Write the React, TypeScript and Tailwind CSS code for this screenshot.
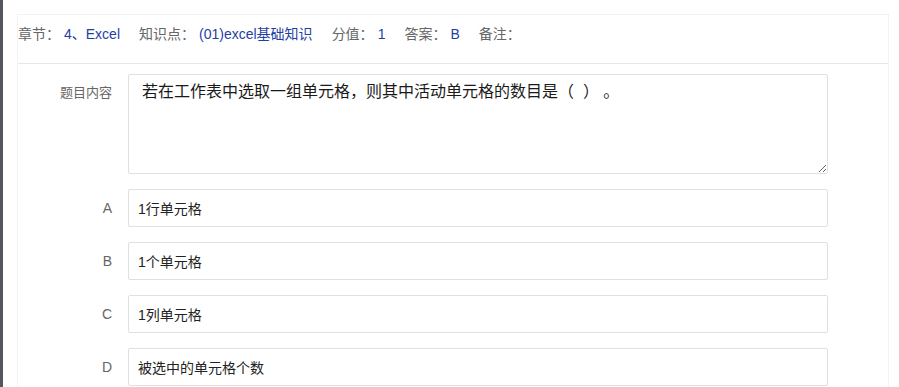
import React from 'react';

const FONT = "font-['Liberation_Sans','Noto_Sans_CJK_SC',sans-serif]";

const meta = [
  { label: '章节：', value: '4、Excel' },
  { label: '知识点：', value: '(01)excel基础知识' },
  { label: '分值：', value: '1' },
  { label: '答案：', value: 'B' },
  { label: '备注：', value: '' },
];

const options = [
  { key: 'A', text: '1行单元格' },
  { key: 'B', text: '1个单元格' },
  { key: 'C', text: '1列单元格' },
  { key: 'D', text: '被选中的单元格个数' },
];

const App: React.FC = () => {
  return (
    <div className={`flex min-h-screen bg-white ${FONT}`}>
      <div className="w-[3px] shrink-0 bg-[#53565c]" />
      <div className="ml-[14px] mt-[14px] w-[872px] border-x border-t border-[#f3f3f3]">
        {/* info bar */}
        <div className="flex h-[49px] border-b border-[#e6e6e6] pt-[9px] text-[14px] leading-[20px]">
          {meta.map((m) => (
            <div key={m.label} className="mr-[19px] flex">
              <span className="text-[#666]">{m.label}</span>
              {m.value && <span className="ml-[4px] text-[#1f3fa3]">{m.value}</span>}
            </div>
          ))}
        </div>

        <div className="flex flex-col gap-[15px] pt-[10px]">
          <div className="flex">
            <div className="w-[110px] shrink-0 pr-[16px] pt-[9px] text-right text-[13px] leading-[20px] text-[#666]">
              题目内容
            </div>
            <textarea
              readOnly
              defaultValue="若在工作表中选取一组单元格，则其中活动单元格的数目是（  ） 。"
              className="h-[100px] w-[700px] rounded-[2px] border border-[#e0e0e0] bg-white py-[5px] pl-[13px] pr-[10px] text-[16px] leading-[24px] text-[#1a1a1a] outline-none"
            />
          </div>

          {options.map((o) => (
            <div key={o.key} className="flex items-center">
              <div className="w-[110px] shrink-0 pr-[16px] text-right text-[14px] text-[#666]">
                {o.key}
              </div>
              <input
                readOnly
                value={o.text}
                className="h-[38px] w-[700px] rounded-[2px] border border-[#e0e0e0] bg-white pl-[9px] text-[14px] text-[#222] outline-none"
              />
            </div>
          ))}
        </div>
      </div>
    </div>
  );
};

export default App;
